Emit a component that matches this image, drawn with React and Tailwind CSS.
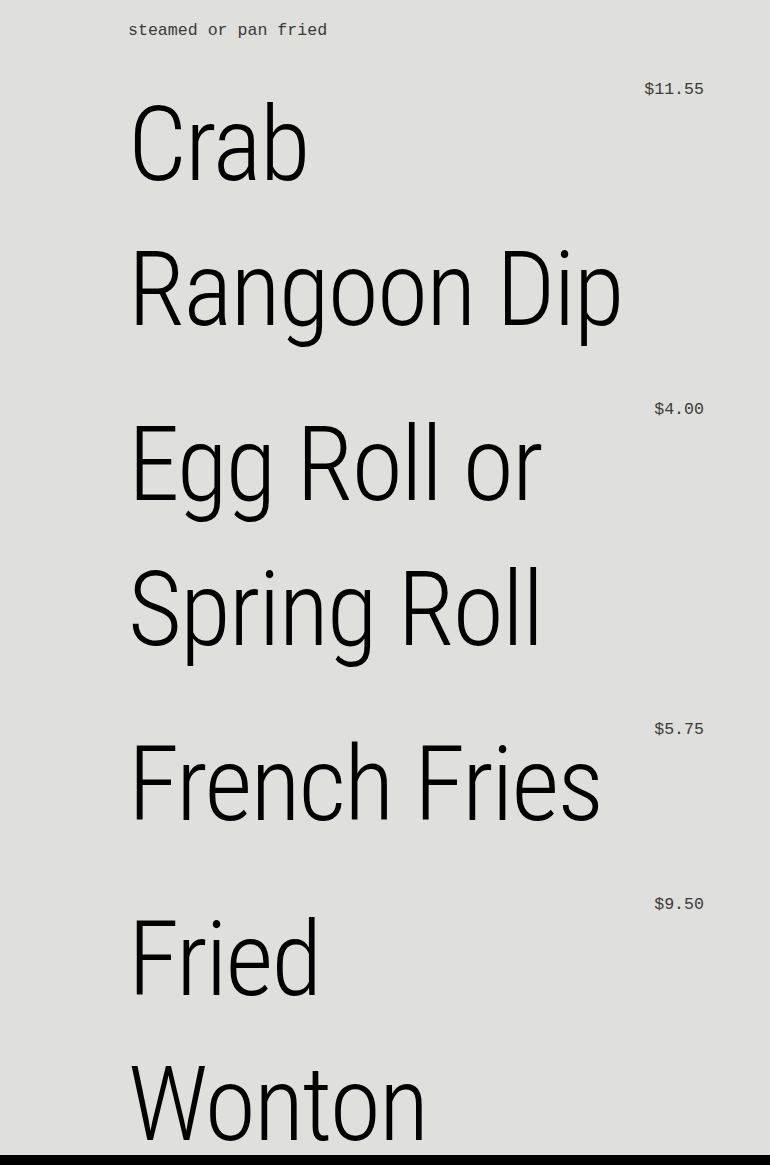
const items = [
  { name: "Crab Rangoon Dip", price: "$11.55" },
  { name: "Egg Roll or Spring Roll", price: "$4.00" },
  { name: "French Fries", price: "$5.75" },
  { name: "Fried Wonton", price: "$9.50" },
];

export default function App() {
  return (
    <div className="h-[1165px] flex flex-col bg-[#dfe0db] overflow-hidden">
      <div className="flex-1 overflow-hidden pl-[128px] pr-[66px] pt-[19px]">
        <p className="font-['Liberation_Mono',monospace] text-[16.6px] leading-[24px] text-[#3a3a3a]">
          steamed or pan fried
        </p>
        <ul className="mt-[29px] flex flex-col gap-[30px]">
          {items.map((it) => (
            <li key={it.name} className="flex items-start justify-between">
              <h2 className="w-[498px] font-['Roboto_Condensed','Liberation_Sans',sans-serif] font-light text-[104px] leading-[145px] tracking-[-1.8px] text-black">
                {it.name}
              </h2>
              <span className="font-['Liberation_Mono',monospace] text-[16.6px] leading-[24px] text-[#3a3a3a] mt-[6px]">
                {it.price}
              </span>
            </li>
          ))}
        </ul>
      </div>
      <div className="h-[10px] bg-black shrink-0" />
    </div>
  );
}
